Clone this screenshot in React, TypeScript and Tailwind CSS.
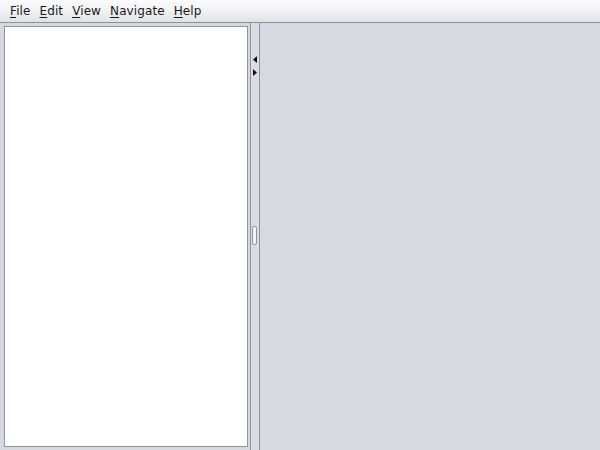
import React from 'react';

const menus = [
  { key: 'F', rest: 'ile' },
  { key: 'E', rest: 'dit' },
  { key: 'V', rest: 'iew' },
  { key: 'N', rest: 'avigate' },
  { key: 'H', rest: 'elp' },
];

export default function App() {
  return (
    <div
      className="flex h-[450px] w-[600px] flex-col overflow-hidden bg-[#d6d9df] text-[12px] text-[#1a1a1a]"
      style={{ fontFamily: '"DejaVu Sans", sans-serif' }}
    >
      {/* menu bar */}
      <div className="flex h-[23px] items-center gap-[9px] border-b border-[#8e929b] bg-gradient-to-b from-[#fbfbfc] via-[#f1f2f4] to-[#dfe1e6] pl-[10px] leading-none tracking-[0.1px]">
        {menus.map((m) => (
          <span key={m.key}>
            <span className="underline underline-offset-[2px]">{m.key}</span>
            {m.rest}
          </span>
        ))}
      </div>

      {/* split pane */}
      <div className="flex flex-1">
        <div className="pb-[3px] pl-[4px] pt-[3px]">
          <div className="h-full w-[244px] border border-[#8f949d] bg-white" />
        </div>

        {/* divider */}
        <div className="relative ml-[2px] flex w-[10px] flex-col border-x border-[#8e929b] bg-[#d9dce2]">
          <div className="flex flex-col items-center gap-[6px] pt-[33px]">
            <svg width="4" height="7" viewBox="0 0 4 7">
              <polygon points="4,0 0,3.5 4,7" fill="#111" />
            </svg>
            <svg width="4" height="7" viewBox="0 0 4 7">
              <polygon points="0,0 4,3.5 0,7" fill="#111" />
            </svg>
          </div>
          <div className="absolute left-[1px] top-[203px] h-[19px] w-[5px] rounded-[2px] border border-[#9097a2] bg-[#f2f3f5]" />
        </div>

        <div className="flex-1" />
      </div>
    </div>
  );
}
